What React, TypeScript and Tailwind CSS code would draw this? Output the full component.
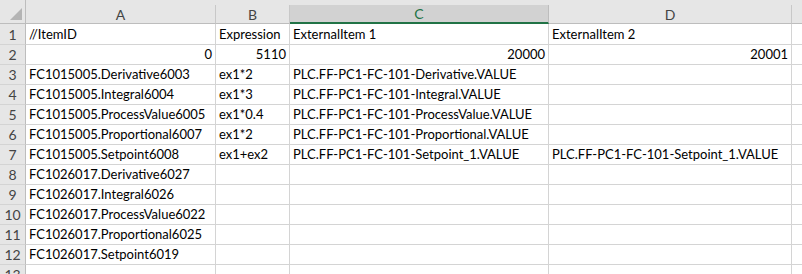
const columns = [
  { key: "A", width: "w-[190px]" },
  { key: "B", width: "w-[74px]" },
  { key: "C", width: "w-[259px]" },
  { key: "D", width: "w-[243px]" },
];

type Cell = { text: string; right?: boolean };

const rows: Cell[][] = [
  [{ text: "//ItemID" }, { text: "Expression" }, { text: "ExternalItem 1" }, { text: "ExternalItem 2" }],
  [{ text: "0", right: true }, { text: "5110", right: true }, { text: "20000", right: true }, { text: "20001", right: true }],
  [{ text: "FC1015005.Derivative6003" }, { text: "ex1*2" }, { text: "PLC.FF-PC1-FC-101-Derivative.VALUE" }, { text: "" }],
  [{ text: "FC1015005.Integral6004" }, { text: "ex1*3" }, { text: "PLC.FF-PC1-FC-101-Integral.VALUE" }, { text: "" }],
  [{ text: "FC1015005.ProcessValue6005" }, { text: "ex1*0.4" }, { text: "PLC.FF-PC1-FC-101-ProcessValue.VALUE" }, { text: "" }],
  [{ text: "FC1015005.Proportional6007" }, { text: "ex1*2" }, { text: "PLC.FF-PC1-FC-101-Proportional.VALUE" }, { text: "" }],
  [{ text: "FC1015005.Setpoint6008" }, { text: "ex1+ex2" }, { text: "PLC.FF-PC1-FC-101-Setpoint_1.VALUE" }, { text: "PLC.FF-PC1-FC-101-Setpoint_1.VALUE" }],
  [{ text: "FC1026017.Derivative6027" }, { text: "" }, { text: "" }, { text: "" }],
  [{ text: "FC1026017.Integral6026" }, { text: "" }, { text: "" }, { text: "" }],
  [{ text: "FC1026017.ProcessValue6022" }, { text: "" }, { text: "" }, { text: "" }],
  [{ text: "FC1026017.Proportional6025" }, { text: "" }, { text: "" }, { text: "" }],
  [{ text: "FC1026017.Setpoint6019" }, { text: "" }, { text: "" }, { text: "" }],
  [{ text: "" }, { text: "" }, { text: "" }, { text: "" }],
];

function App() {
  return (
    <div
      className="w-[802px] h-[274px] overflow-hidden bg-white text-black"
      style={{ fontFamily: "Lato, 'Open Sans', sans-serif" }}
    >
      {/* column header strip */}
      <div className="flex h-[24px] bg-[#e6e6e6] pt-[5px]">
        <div className="relative w-[26px] shrink-0 -mt-[5px] border-r border-b border-[#bdbdbd]">
          <svg className="absolute right-[3px] bottom-[3px]" width="12" height="12" viewBox="0 0 12 12">
            <polygon points="12,0 12,12 0,12" fill="#b4b4b4" />
          </svg>
        </div>
        {columns.map((c) => (
          <div
            key={c.key}
            className={`${c.width} shrink-0 flex items-center justify-center text-[14px] border-r ${
              c.key === "C"
                ? "bg-[#d2d2d2] text-[#217346] border-r-[#bdbdbd] border-b-2 border-b-[#217346]"
                : "text-[#444] border-r-[#c8c8c8] border-b border-b-[#bdbdbd]"
            }`}
          >
            {c.key}
          </div>
        ))}
        <div className="flex-1 border-b border-[#bdbdbd]" />
      </div>

      {rows.map((row, i) => (
        <div key={i} className={`flex ${i === 0 ? "h-[21px]" : "h-[20px]"}`}>
          <div className="w-[26px] shrink-0 flex items-center justify-center bg-[#e6e6e6] text-[14px] text-[#444] border-r border-r-[#bdbdbd] border-b border-b-[#d4d4d4]">
            {i + 1}
          </div>
          {row.map((cell, j) => (
            <div
              key={j}
              className={`${columns[j].width} shrink-0 flex items-end pb-[1px] px-[3px] text-[13px] leading-[18px] whitespace-nowrap border-r border-b border-[#d4d4d4] ${
                cell.right ? "justify-end" : "justify-start"
              }`}
            >
              {cell.text}
            </div>
          ))}
          <div className="flex-1 border-b border-[#d4d4d4]" />
        </div>
      ))}
    </div>
  );
}

export default App;
